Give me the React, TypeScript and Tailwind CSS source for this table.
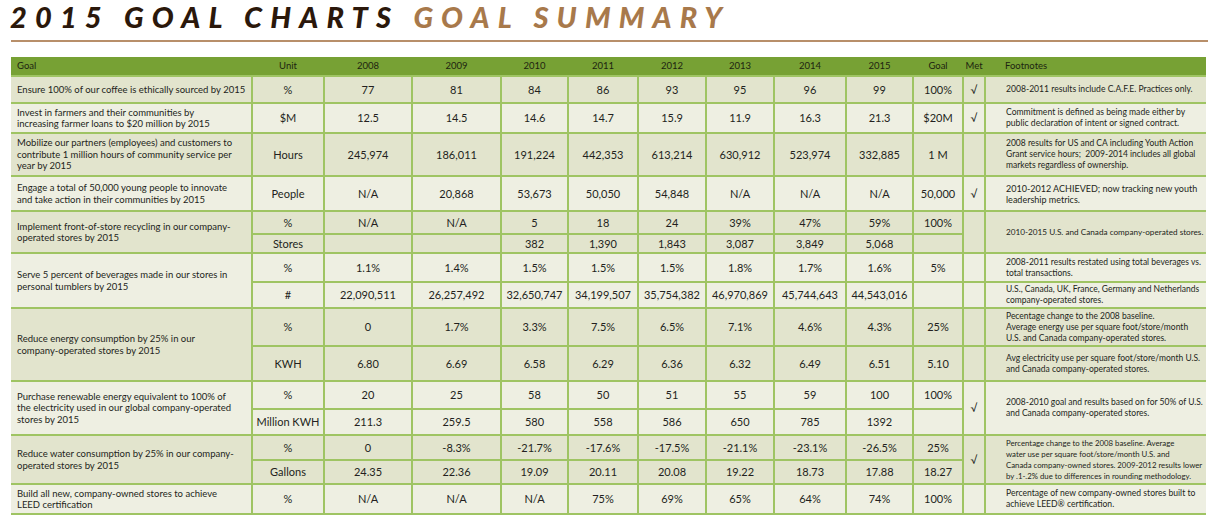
import React from 'react';

interface SubRow {
  unit: string;
  vals: string[];
  goal: string;
  met?: string;
  note?: string;
  ns?: string;
  h: string;
}

interface GoalRow {
  goal: string;
  dark: boolean;
  subs: SubRow[];
  metSpan?: string;
  noteSpan?: string;
  ns?: string;
}

const years = ['2008', '2009', '2010', '2011', '2012', '2013', '2014', '2015'];

const rows: GoalRow[] = [
  {
    goal: 'Ensure 100% of our coffee is ethically sourced by 2015',
    dark: true,
    subs: [
      { unit: '%', vals: ['77', '81', '84', '86', '93', '95', '96', '99'], goal: '100%', met: '√', note: '2008-2011 results include C.A.F.E. Practices only.', ns: 'text-[8.6px]', h: 'h-[27px]' },
    ],
  },
  {
    goal: 'Invest in farmers and their communities by\nincreasing farmer loans to $20 million by 2015',
    dark: false,
    subs: [
      { unit: '$M', vals: ['12.5', '14.5', '14.6', '14.7', '15.9', '11.9', '16.3', '21.3'], goal: '$20M', met: '√', note: 'Commitment is defined as being made either by\npublic declaration of intent or signed contract.', ns: 'text-[8.6px]', h: 'h-[30px]' },
    ],
  },
  {
    goal: 'Mobilize our partners (employees) and customers to\ncontribute 1 million hours of community service per\nyear by 2015',
    dark: true,
    subs: [
      { unit: 'Hours', vals: ['245,974', '186,011', '191,224', '442,353', '613,214', '630,912', '523,974', '332,885'], goal: '1 M', met: '', note: '2008 results for US and CA including Youth Action\nGrant service hours;  2009-2014 includes all global\nmarkets regardless of ownership.', ns: 'text-[8.5px]', h: 'h-[43px]' },
    ],
  },
  {
    goal: 'Engage a total of 50,000 young people to innovate\nand take action in their communities by 2015',
    dark: false,
    subs: [
      { unit: 'People', vals: ['N/A', '20,868', '53,673', '50,050', '54,848', 'N/A', 'N/A', 'N/A'], goal: '50,000', met: '√', note: '2010-2012 ACHIEVED; now tracking new youth\nleadership metrics.', ns: 'text-[9px]', h: 'h-[35px]' },
    ],
  },
  {
    goal: 'Implement front-of-store recycling in our company-\noperated stores by 2015',
    dark: true,
    metSpan: '',
    noteSpan: '2010-2015 U.S. and Canada company-operated stores.',
    ns: 'text-[8.2px]',
    subs: [
      { unit: '%', vals: ['N/A', 'N/A', '5', '18', '24', '39%', '47%', '59%'], goal: '100%', h: 'h-[23px]' },
      { unit: 'Stores', vals: ['', '', '382', '1,390', '1,843', '3,087', '3,849', '5,068'], goal: '', h: 'h-[19px]' },
    ],
  },
  {
    goal: 'Serve 5 percent of beverages made in our stores in\npersonal tumblers by 2015',
    dark: false,
    subs: [
      { unit: '%', vals: ['1.1%', '1.4%', '1.5%', '1.5%', '1.5%', '1.8%', '1.7%', '1.6%'], goal: '5%', met: '', note: '2008-2011 results restated using total beverages vs.\ntotal transactions.', ns: 'text-[8.5px]', h: 'h-[29px]' },
      { unit: '#', vals: ['22,090,511', '26,257,492', '32,650,747', '34,199,507', '35,754,382', '46,970,869', '45,744,643', '44,543,016'], goal: '', met: '', note: 'U.S., Canada, UK, France, Germany and Netherlands\ncompany-operated stores.', ns: 'text-[8.5px]', h: 'h-[26px]' },
    ],
  },
  {
    goal: 'Reduce energy consumption by 25% in our\ncompany-operated stores by 2015',
    dark: true,
    subs: [
      { unit: '%', vals: ['0', '1.7%', '3.3%', '7.5%', '6.5%', '7.1%', '4.6%', '4.3%'], goal: '25%', met: '', note: 'Pecentage change to the 2008 baseline.\nAverage energy use per square foot/store/month\nU.S. and Canada company-operated stores.', ns: 'text-[8.5px]', h: 'h-[38px]' },
      { unit: 'KWH', vals: ['6.80', '6.69', '6.58', '6.29', '6.36', '6.32', '6.49', '6.51'], goal: '5.10', met: '', note: 'Avg electricity use per square foot/store/month U.S.\nand Canada company-operated stores.', ns: 'text-[8.5px]', h: 'h-[35px]' },
    ],
  },
  {
    goal: 'Purchase renewable energy equivalent to 100% of\nthe electricity used in our global company-operated\nstores by 2015',
    dark: false,
    metSpan: '√',
    noteSpan: '2008-2010 goal and results based on for 50% of U.S.\nand Canada company-operated stores.',
    ns: 'text-[8.5px]',
    subs: [
      { unit: '%', vals: ['20', '25', '58', '50', '51', '55', '59', '100'], goal: '100%', h: 'h-[28px]' },
      { unit: 'Million KWH', vals: ['211.3', '259.5', '580', '558', '586', '650', '785', '1392'], goal: '', h: 'h-[26px]' },
    ],
  },
  {
    goal: 'Reduce water consumption by 25% in our company-\noperated stores by 2015',
    dark: true,
    metSpan: '√',
    noteSpan: 'Percentage change to the 2008 baseline. Average\nwater use per square foot/store/month U.S. and\nCanada company-owned stores. 2009-2012 results lower\nby .1-.2% due to differences in rounding methodology.',
    ns: 'text-[7.8px]',
    subs: [
      { unit: '%', vals: ['0', '-8.3%', '-21.7%', '-17.6%', '-17.5%', '-21.1%', '-23.1%', '-26.5%'], goal: '25%', h: 'h-[25px]' },
      { unit: 'Gallons', vals: ['24.35', '22.36', '19.09', '20.11', '20.08', '19.22', '18.73', '17.88'], goal: '18.27', h: 'h-[24px]' },
    ],
  },
  {
    goal: 'Build all new, company-owned stores to achieve\nLEED certification',
    dark: false,
    subs: [
      { unit: '%', vals: ['N/A', 'N/A', 'N/A', '75%', '69%', '65%', '64%', '74%'], goal: '100%', met: '', note: 'Percentage of new company-owned stores built to\nachieve LEED® certification.', ns: 'text-[8.6px]', h: 'h-[30px]' },
    ],
  },
];

const cell = 'border-2 border-[#9fc463] text-center align-middle text-[11px] leading-tight p-0';
const noteCell = 'border-2 border-r-0 border-[#9fc463] text-left align-middle leading-[11px] pl-[20px] pr-0 whitespace-pre';

export default function App() {
  return (
    <div className="bg-white w-[1216px] h-[521px] overflow-hidden text-[#231f20] font-['Lato','Liberation_Sans',sans-serif]">
      {/* TITLE */}
      <div className="pl-[10px] pt-[1px] h-[40px] text-[29px] font-black italic tracking-[0.28em] leading-[32px] whitespace-nowrap">
        <span className="text-[#2b180b]">2015 GOAL CHARTS </span>
        <span className="text-[#a8794b]">GOAL SUMMARY</span>
      </div>
      <div className="ml-[11px] w-[1197px] h-[2px] bg-[#b88f6a]" />

      {/* TABLE */}
      <table className="mt-[15px] ml-[11px] w-[1195px] table-fixed border-collapse">
        <colgroup>
          <col className="w-[241px]" />
          <col className="w-[72px]" />
          <col className="w-[88px]" />
          <col className="w-[89px]" />
          <col className="w-[67px]" />
          <col className="w-[70px]" />
          <col className="w-[68px]" />
          <col className="w-[68px]" />
          <col className="w-[72px]" />
          <col className="w-[67px]" />
          <col className="w-[50px]" />
          <col className="w-[22px]" />
          <col className="w-[221px]" />
        </colgroup>
        <thead>
          <tr className="h-[19px] bg-[#77a134] text-[9.5px] text-[#1d2410]">
            <th className="text-left font-normal pl-[6px] p-0">Goal</th>
            <th className="font-normal p-0">Unit</th>
            {years.map((y) => (
              <th key={y} className="font-normal p-0">{y}</th>
            ))}
            <th className="font-normal p-0">Goal</th>
            <th className="font-normal p-0">Met</th>
            <th className="text-left font-normal pl-[20px] p-0">Footnotes</th>
          </tr>
        </thead>
        <tbody>
          {rows.map((r, i) =>
            r.subs.map((s, j) => (
              <tr key={`${i}-${j}`} className={`${s.h} ${r.dark ? 'bg-[#e2e4cd]' : 'bg-[#eeefe2]'}`}>
                {j === 0 && (
                  <td
                    rowSpan={r.subs.length}
                    className="border-2 border-l-0 border-[#9fc463] text-left align-middle text-[9.5px] leading-[11.5px] pl-[6px] pr-0 whitespace-pre"
                  >
                    {r.goal}
                  </td>
                )}
                <td className={cell}>{s.unit}</td>
                {s.vals.map((v, k) => (
                  <td key={k} className={cell}>{v}</td>
                ))}
                <td className={cell}>{s.goal}</td>
                {r.metSpan !== undefined ? (
                  j === 0 && (
                    <td rowSpan={r.subs.length} className={cell}>{r.metSpan}</td>
                  )
                ) : (
                  <td className={cell}>{s.met}</td>
                )}
                {r.noteSpan !== undefined ? (
                  j === 0 && (
                    <td rowSpan={r.subs.length} className={`${noteCell} ${r.ns}`}>{r.noteSpan}</td>
                  )
                ) : (
                  <td className={`${noteCell} ${s.ns}`}>{s.note}</td>
                )}
              </tr>
            ))
          )}
        </tbody>
      </table>
    </div>
  );
}
